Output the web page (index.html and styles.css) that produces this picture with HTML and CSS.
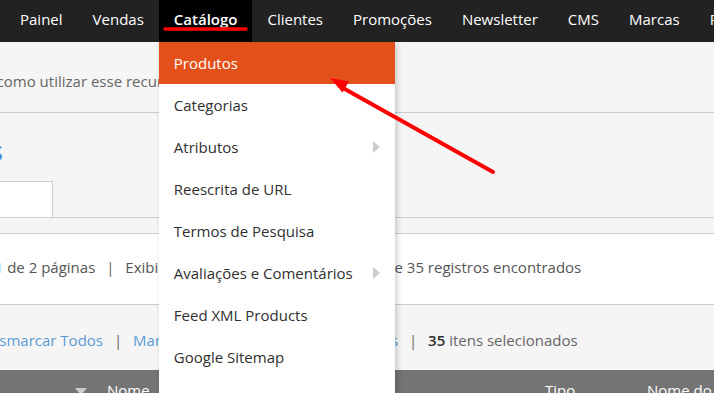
FILE: index.html
```html
<!DOCTYPE html>
<html lang="pt-BR">
<head>
    <meta charset="UTF-8">
    <title>Catálogo - Produtos</title>
    <link rel="stylesheet" href="styles.css">
</head>
<body>
    <nav class="topnav">
        <ul class="menu">
            <li><a href="#">Painel</a></li>
            <li><a href="#">Vendas</a></li>
            <li class="active">
                <a href="#">Catálogo</a>
                <ul class="dropdown">
                    <li class="current"><a href="#">Produtos</a></li>
                    <li><a href="#">Categorias</a></li>
                    <li class="parent"><a href="#">Atributos</a></li>
                    <li><a href="#">Reescrita de URL</a></li>
                    <li><a href="#">Termos de Pesquisa</a></li>
                    <li class="parent"><a href="#">Avaliações e Comentários</a></li>
                    <li><a href="#">Feed XML Products</a></li>
                    <li><a href="#">Google Sitemap</a></li>
                    <li><a href="#">Gerenciar Estoque</a></li>
                </ul>
            </li>
            <li><a href="#">Clientes</a></li>
            <li><a href="#">Promoções</a></li>
            <li><a href="#">Newsletter</a></li>
            <li><a href="#">CMS</a></li>
            <li><a href="#">Marcas</a></li>
            <li><a href="#">Relatórios</a></li>
        </ul>
    </nav>

    <div class="notice">
        <p>Assista ao vídeo e veja como utilizar esse recurso.</p>
    </div>

    <div class="page-head">
        <h1 class="title">Gerenciar Produtos</h1>
    </div>

    <div class="tabs">
        <a href="#" class="tab">Todos</a>
    </div>

    <div class="toolbar">
        <p class="pager">Página 1 de 2 páginas <span class="sep">|</span> Exibindo 20 itens por página <span class="sep sep-last">|</span> Total de 35 registros encontrados</p>
    </div>

    <div class="massaction">
        <p><a href="#">Desmarcar Todos</a> <span class="sep">|</span> <a href="#">Marcar Visíveis</a> <span class="sep">|</span> <a href="#">Desmarcar Visíveis</a> <span class="sep">|</span> <strong>35</strong> itens selecionados</p>
    </div>

    <div class="grid-head">
        <span></span>
        <span class="sorted">Nome</span>
        <span>Tipo</span>
        <span>Nome do Conjunto</span>
    </div>

    <!-- anotação do print -->
    <svg class="annotation" width="714" height="393" viewBox="0 0 714 393">
        <line x1="165" y1="29" x2="246" y2="29" stroke="#f00" stroke-width="3.3" stroke-linecap="round"/>
        <line x1="493" y1="172" x2="343" y2="88" stroke="#f00" stroke-width="4" stroke-linecap="round"/>
        <polygon points="330,78 349,81.5 342.5,92.5" fill="#f00"/>
    </svg>
</body>
</html>
```

FILE: styles.css
```css
* {
    box-sizing: border-box;
}

body {
    margin: 0;
    font-family: 'Open Sans', 'Liberation Sans', sans-serif;
    font-size: 15px;
    background-color: #f5f5f5;
    color: #666;
    overflow: hidden;
    position: relative;
    height: 393px;
}

p {
    margin: 0;
    white-space: nowrap;
}

a {
    text-decoration: none;
}

/* menu topo */
.topnav {
    background: #222;
    height: 42px;
    position: relative;
    z-index: 10;
}

.menu {
    list-style: none;
    margin: 0;
    padding: 0 0 0 5px;
    display: flex;
    white-space: nowrap;
}

.menu > li {
    position: relative;
}

.menu > li > a {
    display: block;
    padding: 0 15px;
    line-height: 39px;
    height: 42px;
    color: #fff;
}

.menu > li.active > a {
    background: #000;
    font-weight: 600;
}

.dropdown {
    position: absolute;
    top: 42px;
    left: 0;
    width: 236px;
    margin: 0;
    padding: 0;
    list-style: none;
    background: #fff;
    box-shadow: 2px 2px 6px rgba(0, 0, 0, 0.2);
}

.dropdown a {
    display: block;
    position: relative;
    padding: 0 15px;
    line-height: 42px;
    color: #303030;
}

.dropdown .current a {
    background: #e4501a;
    color: #fff;
}

.dropdown .parent a::after {
    content: "";
    position: absolute;
    right: 15px;
    top: 15px;
    border-left: 7px solid #ccc;
    border-top: 6px solid transparent;
    border-bottom: 6px solid transparent;
}

/* conteúdo */
.notice {
    height: 71px;
    padding-top: 29px;
    border-bottom: 1px solid #ccc;
    overflow: hidden;
}

.notice p {
    text-indent: -163px;
}

.page-head {
    height: 68px;
    padding-top: 19px;
    display: flex;
    width: 3px;
    justify-content: flex-end;
}

.title {
    margin: 0;
    flex-shrink: 0;
    font-size: 28px;
    font-weight: 400;
    line-height: 36px;
    color: #4a90d9;
    white-space: nowrap;
}

.tabs {
    height: 37px;
    border-bottom: 1px solid #ccc;
    display: flex;
    overflow: hidden;
}

.tab {
    display: block;
    width: 160px;
    margin-left: -107px;
    height: 37px;
    background: #fff;
    border: 1px solid #ccc;
    border-bottom: none;
    color: #303030;
    padding: 8px 15px;
}

.toolbar {
    margin-top: 15px;
    height: 72px;
    background: #fff;
    border-top: 1px solid #ccc;
    border-bottom: 1px solid #ccc;
    padding-top: 23px;
    overflow: hidden;
}

.pager {
    text-indent: -56px;
    color: #555;
}

.sep {
    margin: 0 7px;
    color: #666;
}

.pager .sep-last {
    margin: 0 5px 0 2px;
}

.massaction {
    height: 65px;
    padding-top: 25px;
    overflow: hidden;
}

.massaction p {
    text-indent: -20px;
}

.massaction a {
    color: #5b9bd5;
}

.massaction strong {
    color: #303030;
    font-weight: 600;
}

.grid-head {
    display: grid;
    grid-template-columns: 75px 470px 102px 1fr;
    height: 40px;
    background: #747474;
    color: #fff;
    line-height: 40px;
    white-space: nowrap;
}

.grid-head .sorted::before {
    content: "";
    display: inline-block;
    margin-right: 20px;
    vertical-align: middle;
    border-top: 7px solid #ccc;
    border-left: 6px solid transparent;
    border-right: 6px solid transparent;
}

.annotation {
    position: absolute;
    top: 0;
    left: 0;
    z-index: 20;
    pointer-events: none;
}
```
